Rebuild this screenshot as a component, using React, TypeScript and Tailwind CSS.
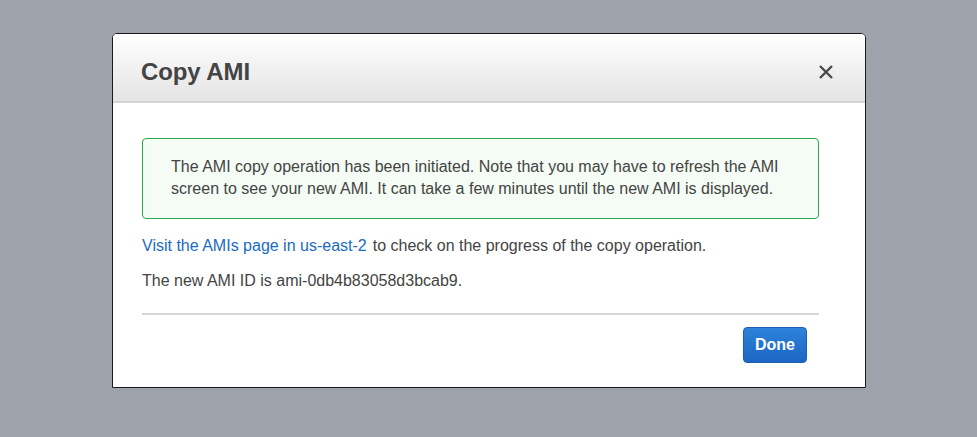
export default function App() {
  return (
    <div className="w-[977px] h-[437px] bg-[#9ea2aa] pt-[33px] pl-[112px] font-['Liberation_Sans',Arial,sans-serif]">
      <div className="w-[754px] h-[355px] bg-white border border-[#1a1a1a] rounded-t-[5px] overflow-hidden flex flex-col">
        <div className="h-[69px] shrink-0 bg-gradient-to-b from-white to-[#e4e4e4] border-b-2 border-[#d4d4d4] flex items-center justify-between pt-[9px] pl-[28px] pr-[31px]">
          <h1 className="text-[24px] font-bold text-[#444] tracking-[-0.1px]">Copy AMI</h1>
          <svg width="16" height="16" viewBox="0 0 16 16">
            <path d="M2 2 L14 14 M14 2 L2 14" stroke="#4a4a4a" strokeWidth="2.4" strokeLinecap="butt" />
          </svg>
        </div>
        <div className="pl-[29px] pr-[46px] pt-[35px] flex flex-col text-[16px] text-[#444]">
          <div className="h-[81px] border border-[#2aa84a] rounded-[4px] bg-[#f4fcf5] pl-[28px] pr-[12px] flex items-center leading-[22px]">
            <p className="-mt-[1px]">
              The AMI copy operation has been initiated. Note that you may have to refresh the AMI
              <br />
              screen to see your new AMI. It can take a few minutes until the new AMI is displayed.
            </p>
          </div>
          <p className="mt-[16px] leading-[22px]">
            <a className="text-[#1a6bc2]">Visit the AMIs page in us-east-2</a>
            <span className="ml-[6px]">to check on the progress of the copy operation.</span>
          </p>
          <p className="mt-[13px] leading-[22px]">The new AMI ID is ami-0db4b83058d3bcab9.</p>
          <div className="mt-[21px] h-[2px] bg-[#d6d6d6]" />
          <div className="flex justify-end pr-[12px] pt-[12px]">
            <button className="w-[64px] h-[36px] rounded-[4px] border border-[#1c5fae] bg-gradient-to-b from-[#2e82d8] to-[#1b66c4] text-white text-[16px] font-bold">
              Done
            </button>
          </div>
        </div>
      </div>
    </div>
  );
}
